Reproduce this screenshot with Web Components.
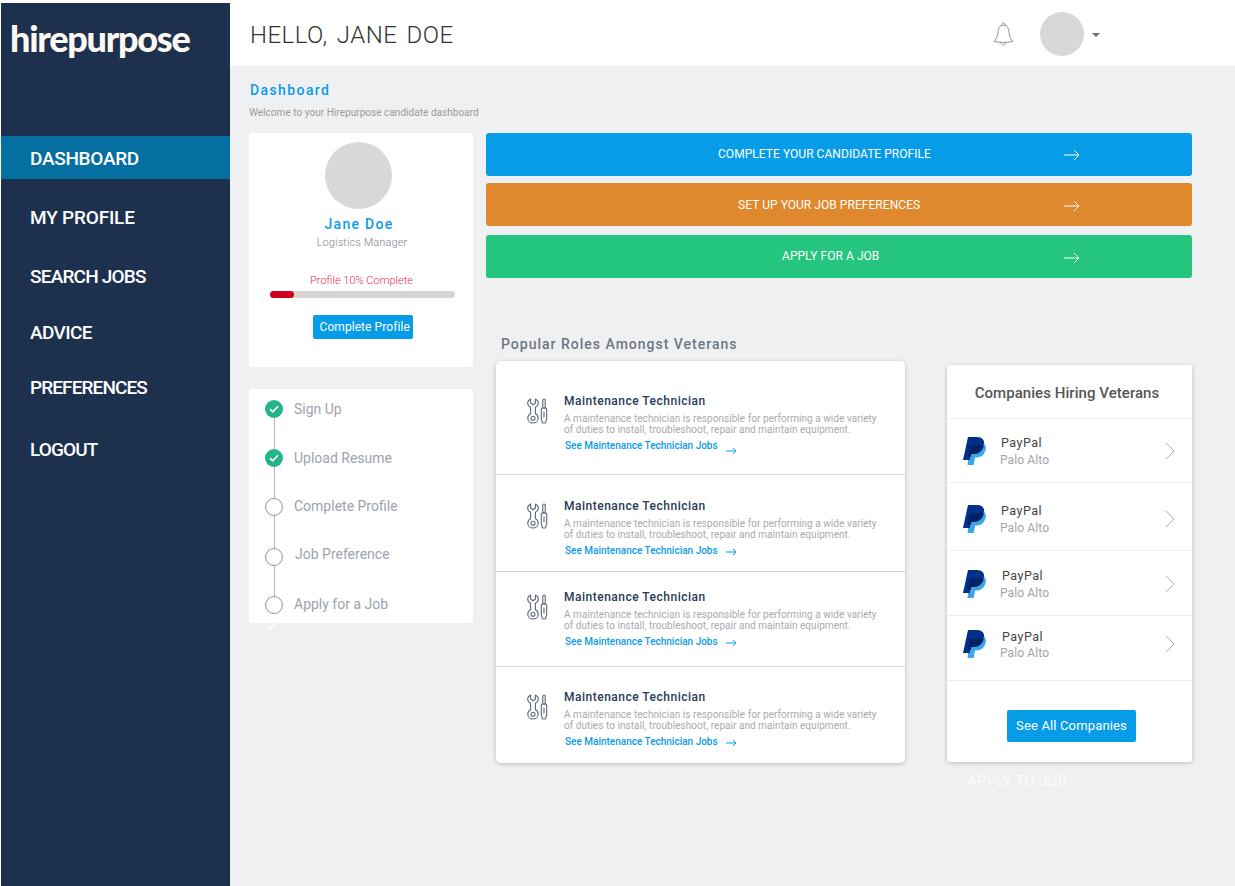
<!DOCTYPE html>
<html lang="en">
<head>
<meta charset="utf-8">
<title>Hirepurpose dashboard</title>
<style>
  html, body { margin: 0; height: 100%; background: #fff; }
  body { font-family: Roboto, "Liberation Sans", sans-serif; overflow: hidden; }
</style>
</head>
<body>
<app-shell>
  <side-nav slot="nav">
    <nav-item active style="--ls:-.3px">Dashboard</nav-item>
    <nav-item style="--top:16px;--ls:-.2px">My Profile</nav-item>
    <nav-item style="--top:16px;--ls:-.8px">Search Jobs</nav-item>
    <nav-item style="--top:13px;--ls:-.6px">Advice</nav-item>
    <nav-item style="--top:12px;--ls:-.9px">Preferences</nav-item>
    <nav-item style="--top:19px;--ls:-.9px">Logout</nav-item>
  </side-nav>
  <top-bar slot="top" greeting="Hello, Jane Doe"></top-bar>

  <page-title heading="Dashboard" sub="Welcome to your Hirepurpose candidate dashboard"></page-title>

  <dash-columns>
    <div slot="left">
      <profile-card name="Jane Doe" role="Logistics Manager" percent="10"></profile-card>
      <step-list>
        <step-item done style="--h:49px;--ty:0px">Sign Up</step-item>
        <step-item done style="--h:49px;--ty:0px">Upload Resume</step-item>
        <step-item style="--h:50px;--ty:-1px">Complete Profile</step-item>
        <step-item style="--h:48px;--ty:-3px;--tx:1px">Job Preference</step-item>
        <step-item last style="--h:27px;--ty:-1px">Apply for a Job</step-item>
      </step-list>
    </div>
    <div slot="right">
      <action-button style="--bg:#069ce8;--x:232px">Complete your candidate profile</action-button>
      <action-button style="--bg:#e0882d;--x:252px;--gap:7px;--ay:2px;--ly:0px">Set up your job preferences</action-button>
      <action-button style="--bg:#24c57f;--x:296px;--gap:9px;--ay:2px">Apply for a job</action-button>
      <lower-row>
        <div slot="roles">
          <section-title>Popular Roles Amongst Veterans</section-title>
          <role-list>
            <role-row style="--h:112px;--top:32px;--ay:7px"></role-row>
            <role-row style="--h:96px;--top:24px"></role-row>
            <role-row style="--h:94px;--top:18px"></role-row>
            <role-row last style="--h:96px;--top:23px"></role-row>
          </role-list>
        </div>
        <div slot="companies">
          <company-card heading="Companies Hiring Veterans" action="See All Companies">
            <company-row style="--h:63px;--top:16px"></company-row>
            <company-row style="--h:67px;--top:20px"></company-row>
            <company-row style="--h:64px;--top:17px;--nx:1px"></company-row>
            <company-row style="--h:64px;--top:13px;--nx:1px;--oy:-1px"></company-row>
          </company-card>
          <ghost-label>Apply to job</ghost-label>
        </div>
      </lower-row>
    </div>
  </dash-columns>
</app-shell>

<script>
  class AppShell extends HTMLElement {
    constructor () {
      super()
      this.attachShadow({ mode: 'open' })
    }
    connectedCallback () {
      this.shadowRoot.innerHTML = /*html*/`
      <style>
        :host { display: grid; grid-template-columns: 230px 1fr; height: 886px; }
        .nav { display: flex; padding: 3px 0 0 1px; min-height: 0; }
        .body { display: flex; flex-direction: column; min-width: 0; }
        main { flex: 1; background: #eff0f2; padding-left: 19px; }
      </style>
      <div class="nav"><slot name="nav"></slot></div>
      <div class="body">
        <slot name="top"></slot>
        <main><slot></slot></main>
      </div>
      `
    }
  }

  class SideNav extends HTMLElement {
    constructor () {
      super()
      this.attachShadow({ mode: 'open' })
    }
    connectedCallback () {
      this.shadowRoot.innerHTML = /*html*/`
      <style>
        :host { display: block; flex: 1; background: #1d304d; color: #fff; }
        .logo {
          height: 133px;
          padding: 10px 0 0 9px;
          box-sizing: border-box;
          font: 900 36px/50px Lato, sans-serif;
          letter-spacing: -1.25px;
          color: #fdf8f0;
        }
      </style>
      <div class="logo">hirepurpose</div>
      <slot></slot>
      `
    }
  }

  class NavItem extends HTMLElement {
    constructor () {
      super()
      this.attachShadow({ mode: 'open' })
    }
    connectedCallback () {
      this.shadowRoot.innerHTML = /*html*/`
      <style>
        :host {
          display: block;
          height: 43px;
          margin-top: var(--top, 0);
          padding-left: 29px;
          font: 500 19px/46px Roboto, sans-serif;
          letter-spacing: var(--ls, 0);
          text-transform: uppercase;
          color: #fff;
        }
        :host([active]) { background: #056fa1; }
      </style>
      <slot></slot>
      `
    }
  }

  class TopBar extends HTMLElement {
    constructor () {
      super()
      this.attachShadow({ mode: 'open' })
    }
    connectedCallback () {
      this.shadowRoot.innerHTML = /*html*/`
      <style>
        :host {
          display: flex;
          align-items: center;
          height: 66px;
          padding-left: 20px;
          background: #fff;
        }
        h1 {
          margin: 4px 0 0;
          flex: 1;
          font: 300 24px/30px Roboto, sans-serif;
          letter-spacing: .45px;
          word-spacing: 3px;
          text-transform: uppercase;
          color: #333;
        }
        svg.bell { display: block; margin-right: 26px; margin-top: 1px; }
        .avatar { width: 44px; height: 44px; border-radius: 50%; background: #d8d8d8; margin-top: 2px; }
        .caret {
          width: 0; height: 0;
          margin: 4px 135px 0 8px;
          border-left: 4px solid transparent;
          border-right: 4px solid transparent;
          border-top: 4px solid #6d6d72;
        }
      </style>
      <h1>${this.getAttribute('greeting')}</h1>
      <svg class="bell" width="21" height="24" viewBox="0 0 21 24" fill="none" stroke="#8b929b" stroke-width="1" stroke-linejoin="round">
        <path d="M10.5 3.2C6.6 3.2 5.4 6.4 5.1 9.6 4.8 13.6 3.8 16.4 1.2 19.4c5.8 1.4 12.8 1.4 18.6 0-2.6-3-3.6-5.8-3.9-9.8-.3-3.2-1.5-6.4-5.4-6.4Z"/>
        <path d="M8.8 3.6c-.2-1.6.6-2.6 1.7-2.6s1.9 1 1.7 2.6"/>
        <path d="M8 20.6c.3 1.5 1.2 2.3 2.5 2.3s2.2-.8 2.5-2.3"/>
      </svg>
      <div class="avatar"></div>
      <div class="caret"></div>
      `
    }
  }

  class PageTitle extends HTMLElement {
    constructor () {
      super()
      this.attachShadow({ mode: 'open' })
    }
    connectedCallback () {
      this.shadowRoot.innerHTML = /*html*/`
      <style>
        :host { display: block; padding-top: 16px; }
        h2 {
          margin: 0 0 0 1px;
          font: 500 14px/16px Roboto, sans-serif;
          letter-spacing: 1.4px;
          color: #0a9be8;
        }
        p { margin: 9px 0 0; font: 400 10px/12px Roboto, sans-serif; letter-spacing: .04px; color: #9b9b9b; }
      </style>
      <h2>${this.getAttribute('heading')}</h2>
      <p>${this.getAttribute('sub')}</p>
      `
    }
  }

  class DashColumns extends HTMLElement {
    constructor () {
      super()
      this.attachShadow({ mode: 'open' })
    }
    connectedCallback () {
      this.shadowRoot.innerHTML = /*html*/`
      <style>
        :host {
          display: grid;
          grid-template-columns: 224px 706px;
          column-gap: 13px;
          margin-top: 14px;
        }
      </style>
      <slot name="left"></slot>
      <slot name="right"></slot>
      `
    }
  }

  class ProfileCard extends HTMLElement {
    constructor () {
      super()
      this.attachShadow({ mode: 'open' })
    }
    connectedCallback () {
      const percent = this.getAttribute('percent')
      this.shadowRoot.innerHTML = /*html*/`
      <style>
        :host {
          display: flex;
          flex-direction: column;
          align-items: center;
          box-sizing: border-box;
          height: 234px;
          padding-top: 9px;
          background: #fff;
          border-radius: 3px;
        }
        .avatar { width: 67px; height: 67px; border-radius: 50%; background: #d8d8d8; margin-right: 5px; }
        .name {
          margin: 7px 4px 0 0;
          font: 500 14px/16px Roboto, sans-serif;
          letter-spacing: 1.3px;
          color: #0a9be8;
        }
        .role { margin: 5px 0 0 2px; font: 300 11px/12px Roboto, sans-serif; letter-spacing: .1px; color: #85858a; }
        .label { margin: 26px 0 0 1px; font: 300 11px/12px Roboto, sans-serif; color: #e0304a; }
        .bar {
          width: 185px; height: 7px;
          margin: 4px 0 0 3px;
          border-radius: 4px;
          background: #d8d3d3;
        }
        .fill { width: 13%; height: 100%; border-radius: 4px; background: #d0021b; }
        .btn {
          width: 100px; height: 24px;
          box-sizing: border-box;
          margin: 17px 0 0 3px;
          padding-left: 7px;
          border-radius: 2px;
          background: #069ce8;
          font: 400 12px/25px Roboto, sans-serif;
          letter-spacing: .07px;
          color: #fff;
          white-space: nowrap;
        }
      </style>
      <div class="avatar"></div>
      <div class="name">${this.getAttribute('name')}</div>
      <div class="role">${this.getAttribute('role')}</div>
      <div class="label">Profile ${percent}% Complete</div>
      <div class="bar"><div class="fill"></div></div>
      <div class="btn">Complete Profile</div>
      `
    }
  }

  class StepList extends HTMLElement {
    constructor () {
      super()
      this.attachShadow({ mode: 'open' })
    }
    connectedCallback () {
      this.shadowRoot.innerHTML = /*html*/`
      <style>
        :host {
          display: block;
          box-sizing: border-box;
          height: 234px;
          margin-top: 22px;
          padding: 11px 0 0 16px;
          background: #fff;
          border-radius: 3px;
        }
      </style>
      <slot></slot>
      `
    }
  }

  class StepItem extends HTMLElement {
    constructor () {
      super()
      this.attachShadow({ mode: 'open' })
    }
    connectedCallback () {
      const done = this.hasAttribute('done')
      const last = this.hasAttribute('last')
      this.shadowRoot.innerHTML = /*html*/`
      <style>
        :host { display: flex; height: var(--h, 49px); }
        .mark { display: flex; flex-direction: column; align-items: center; width: 18px; }
        .dot {
          flex: none;
          box-sizing: border-box;
          width: 18px; height: 18px;
          border-radius: 50%;
          border: 1px solid #8a929c;
          background: #fff;
          display: flex;
          align-items: center;
          justify-content: center;
        }
        :host([done]) .dot { border: 0; background: #24b48c; }
        .line { flex: 1; width: 1px; background: #b4b7bb; }
        .tail { flex: none; margin: 8px 0 0 -4px; display: block; }
        .text {
          margin: var(--ty, 0) 0 0 calc(11px + var(--tx, 0px));
          font: 400 14px/18px Roboto, sans-serif;
          color: #9da3ac;
          white-space: nowrap;
        }
      </style>
      <div class="mark">
        <div class="dot">${done ? '<svg width="10" height="8" viewBox="0 0 10 8" fill="none" stroke="#fff" stroke-width="1.6"><path d="M1 4.2 3.7 6.8 9 1.2"/></svg>' : ''}</div>
        ${last
          ? '<svg class="tail" width="10" height="8" viewBox="0 0 10 8" fill="none" stroke="#fff" stroke-width="1.2"><path d="M1 4 3.7 6.8 9 1.2"/></svg>'
          : '<div class="line"></div>'}
      </div>
      <div class="text"><slot></slot></div>
      `
    }
  }

  class ActionButton extends HTMLElement {
    constructor () {
      super()
      this.attachShadow({ mode: 'open' })
    }
    connectedCallback () {
      this.shadowRoot.innerHTML = /*html*/`
      <style>
        :host {
          display: flex;
          align-items: center;
          height: 43px;
          margin-top: var(--gap, 0);
          background: var(--bg);
          border-radius: 3px;
          color: #fff;
        }
        .label {
          flex: none;
          box-sizing: border-box;
          width: 578px;
          padding-left: var(--x);
          margin-top: var(--ly, -2px);
          font: 400 12px/16px Roboto, sans-serif;
          letter-spacing: .05px;
          text-transform: uppercase;
          white-space: nowrap;
        }
        svg { display: block; margin-top: var(--ay, 0); }
      </style>
      <div class="label"><slot></slot></div>
      <svg width="16" height="12" viewBox="0 0 16 12" fill="none" stroke="#fff" stroke-width="1">
        <path d="M0 6H15M10 1l5 5-5 5"/>
      </svg>
      `
    }
  }

  class LowerRow extends HTMLElement {
    constructor () {
      super()
      this.attachShadow({ mode: 'open' })
    }
    connectedCallback () {
      this.shadowRoot.innerHTML = /*html*/`
      <style>
        :host {
          display: grid;
          grid-template-columns: 409px 245px;
          column-gap: 42px;
          margin: 58px 0 0 10px;
        }
      </style>
      <slot name="roles"></slot>
      <slot name="companies"></slot>
      `
    }
  }

  class SectionTitle extends HTMLElement {
    constructor () {
      super()
      this.attachShadow({ mode: 'open' })
    }
    connectedCallback () {
      this.shadowRoot.innerHTML = /*html*/`
      <style>
        :host {
          display: block;
          padding-left: 5px;
          font: 500 14px/16px Roboto, sans-serif;
          letter-spacing: 1px;
          color: #6c7783;
        }
      </style>
      <slot></slot>
      `
    }
  }

  class RoleList extends HTMLElement {
    constructor () {
      super()
      this.attachShadow({ mode: 'open' })
    }
    connectedCallback () {
      this.shadowRoot.innerHTML = /*html*/`
      <style>
        :host {
          display: block;
          margin-top: 9px;
          padding-top: 1px;
          background: #fff;
          border-radius: 5px;
          box-shadow: 0 1px 4px rgba(0, 0, 0, .22);
        }
      </style>
      <slot></slot>
      `
    }
  }

  class RoleRow extends HTMLElement {
    constructor () {
      super()
      this.attachShadow({ mode: 'open' })
    }
    connectedCallback () {
      this.shadowRoot.innerHTML = /*html*/`
      <style>
        :host {
          display: flex;
          height: calc(var(--h) - var(--top));
          padding: var(--top) 0 0 31px;
          border-bottom: 1px solid #d2d3d6;
        }
        :host([last]) { border-bottom: 0; }
        svg.tools { flex: none; display: block; margin: 4px 16px 0 0; }
        h3 {
          margin: 0;
          font: 500 12px/14px Roboto, sans-serif;
          letter-spacing: .5px;
          color: #2a3a57;
        }
        p {
          margin: 5px 0 0;
          font: 400 10px/11px Roboto, sans-serif;
          letter-spacing: .05px;
          color: #a9a9ad;
          width: 330px;
        }
        .link {
          display: flex;
          height: 12px;
          margin: 5px 0 0 1px;
          font: 500 10px/12px Roboto, sans-serif;
          color: #0a9be8;
        }
        .link svg { display: block; margin: var(--ay, 3px) 0 0 8px; }
      </style>
      <svg class="tools" width="21" height="26" viewBox="0 0 21 26" fill="none" stroke="#5d6679" stroke-width="1.1" stroke-linejoin="round">
        <path d="M3.6 1C1.6 2 .6 3.8 .7 5.6c.1 1.6 1.2 3 2.9 3.7v6.500C1.800 16.600 .8 18.300 .8 20.200c0 2.700 2.300 4.800 5.200 4.800s5.200-2.100 5.200-4.800c0-1.900-1-3.600-2.800-4.400V9.300c1.700-.7 2.800-2.100 2.900-3.700.1-1.800-.9-3.600-2.900-4.600v4L6 6.800 3.600 5Z"/>
        <circle cx="6" cy="20.200" r="2"/>
        <path d="M17 1c-.8 0-1.200.6-1.200 1.300V10h2.400V2.300C18.200 1.600 17.800 1 17 1Z"/>
        <path d="M15.600 10h2.800c.8 0 1.300.6 1.300 1.400v9c0 1-.3 1.600-.8 2.200v1.500c0 .5-.4.900-.9.900h-2c-.5 0-.9-.4-.9-.9v-1.500c-.5-.6-.8-1.200-.8-2.200v-9c0-.8.500-1.400 1.300-1.400Z"/>
        <path d="M17 14v5" stroke-linecap="round"/>
      </svg>
      <div>
        <h3>Maintenance Technician</h3>
        <p>A maintenance technician is responsible for performing a wide variety<br>of duties to install, troubleshoot, repair and maintain equipment.</p>
        <div class="link">See Maintenance Technician Jobs
          <svg width="11" height="8" viewBox="0 0 11 8" fill="none" stroke="#0a9be8" stroke-width="1"><path d="M0 4H10M7 1l3 3-3 3"/></svg>
        </div>
      </div>
      `
    }
  }

  class CompanyCard extends HTMLElement {
    constructor () {
      super()
      this.attachShadow({ mode: 'open' })
    }
    connectedCallback () {
      this.shadowRoot.innerHTML = /*html*/`
      <style>
        :host {
          display: block;
          box-sizing: border-box;
          height: 397px;
          margin-top: 29px;
          background: #fff;
          border-radius: 3px;
          box-shadow: 0 1px 4px rgba(0, 0, 0, .22);
        }
        h3 {
          margin: 0;
          height: 54px;
          box-sizing: border-box;
          padding-right: 5px;
          border-bottom: 1px solid #eeeef0;
          font: 500 15px/57px Roboto, sans-serif;
          text-align: center;
          color: #555;
          letter-spacing: .05px;
        }
        .foot { display: flex; justify-content: center; padding: 29px 0 0 4px; }
        .btn {
          width: 129px; height: 32px;
          border-radius: 2px;
          background: #069ce8;
          font: 400 13px/32px Roboto, sans-serif;
          letter-spacing: .15px;
          text-align: center;
          color: #fff;
        }
      </style>
      <h3>${this.getAttribute('heading')}</h3>
      <slot></slot>
      <div class="foot"><div class="btn">${this.getAttribute('action')}</div></div>
      `
    }
  }

  class CompanyRow extends HTMLElement {
    constructor () {
      super()
      this.attachShadow({ mode: 'open' })
    }
    connectedCallback () {
      this.shadowRoot.innerHTML = /*html*/`
      <style>
        :host {
          display: flex;
          align-items: flex-start;
          box-sizing: border-box;
          height: calc(var(--h) + 1px);
          padding: var(--top) 0 0 16px;
          border-bottom: 1px solid #eeeef0;
        }
        svg.logo { flex: none; display: block; margin-top: calc(2px + var(--oy, 0px)); }
        .who { flex: 1; margin-left: 14px; }
        .name {
          margin-left: calc(1px + var(--nx, 0px));
          font: 400 12.5px/16px Roboto, sans-serif;
          letter-spacing: .5px;
          color: #444;
        }
        .place { margin-top: calc(1px + var(--oy, 0px)); font: 400 12px/16px Roboto, sans-serif; color: #a3a3a6; letter-spacing: .1px; }
        svg.chev { flex: none; display: block; margin: calc(7px + var(--oy, 0px)) 17px 0 0; }
      </style>
      <svg class="logo" width="23" height="28" viewBox="0 0 23 28">
        <path fill="#003087" d="M5 0h9c5 0 8 3 7 8-1 6-5 9-10 9H8.500L7 23H0Z"/>
        <path fill="#3ba6ea" d="M20.700 6.500c2 1.500 2.500 3.500 2 6-1 5-4.700 8-9.200 8H12L10.700 28H4.500l.7-5H7l1.500-6H11c5 0 9-3 9.700-10.500Z"/>
        <path fill="#012169" d="M6.500 9c5-1 10.500-1 14.300-.5-1 5.500-5 8.500-9.800 8.500H8.500L7.700 20H4.700Z"/>
      </svg>
      <div class="who">
        <div class="name">PayPal</div>
        <div class="place">Palo Alto</div>
      </div>
      <svg class="chev" width="10" height="18" viewBox="0 0 10 18" fill="none" stroke="#a9a9ad" stroke-width="1"><path d="M1 .8 9 9 1 17.200"/></svg>
      `
    }
  }

  class GhostLabel extends HTMLElement {
    constructor () {
      super()
      this.attachShadow({ mode: 'open' })
    }
    connectedCallback () {
      this.shadowRoot.innerHTML = /*html*/`
      <style>
        :host {
          display: block;
          margin-top: 10px;
          padding-left: 20px;
          font: 400 15px/18px Roboto, sans-serif;
          letter-spacing: .2px;
          text-transform: uppercase;
          color: rgba(255, 255, 255, .8);
        }
      </style>
      <slot></slot>
      `
    }
  }

  customElements.define('app-shell', AppShell)
  customElements.define('side-nav', SideNav)
  customElements.define('nav-item', NavItem)
  customElements.define('top-bar', TopBar)
  customElements.define('page-title', PageTitle)
  customElements.define('dash-columns', DashColumns)
  customElements.define('profile-card', ProfileCard)
  customElements.define('step-list', StepList)
  customElements.define('step-item', StepItem)
  customElements.define('action-button', ActionButton)
  customElements.define('lower-row', LowerRow)
  customElements.define('section-title', SectionTitle)
  customElements.define('role-list', RoleList)
  customElements.define('role-row', RoleRow)
  customElements.define('company-card', CompanyCard)
  customElements.define('company-row', CompanyRow)
  customElements.define('ghost-label', GhostLabel)
</script>
</body>
</html>
